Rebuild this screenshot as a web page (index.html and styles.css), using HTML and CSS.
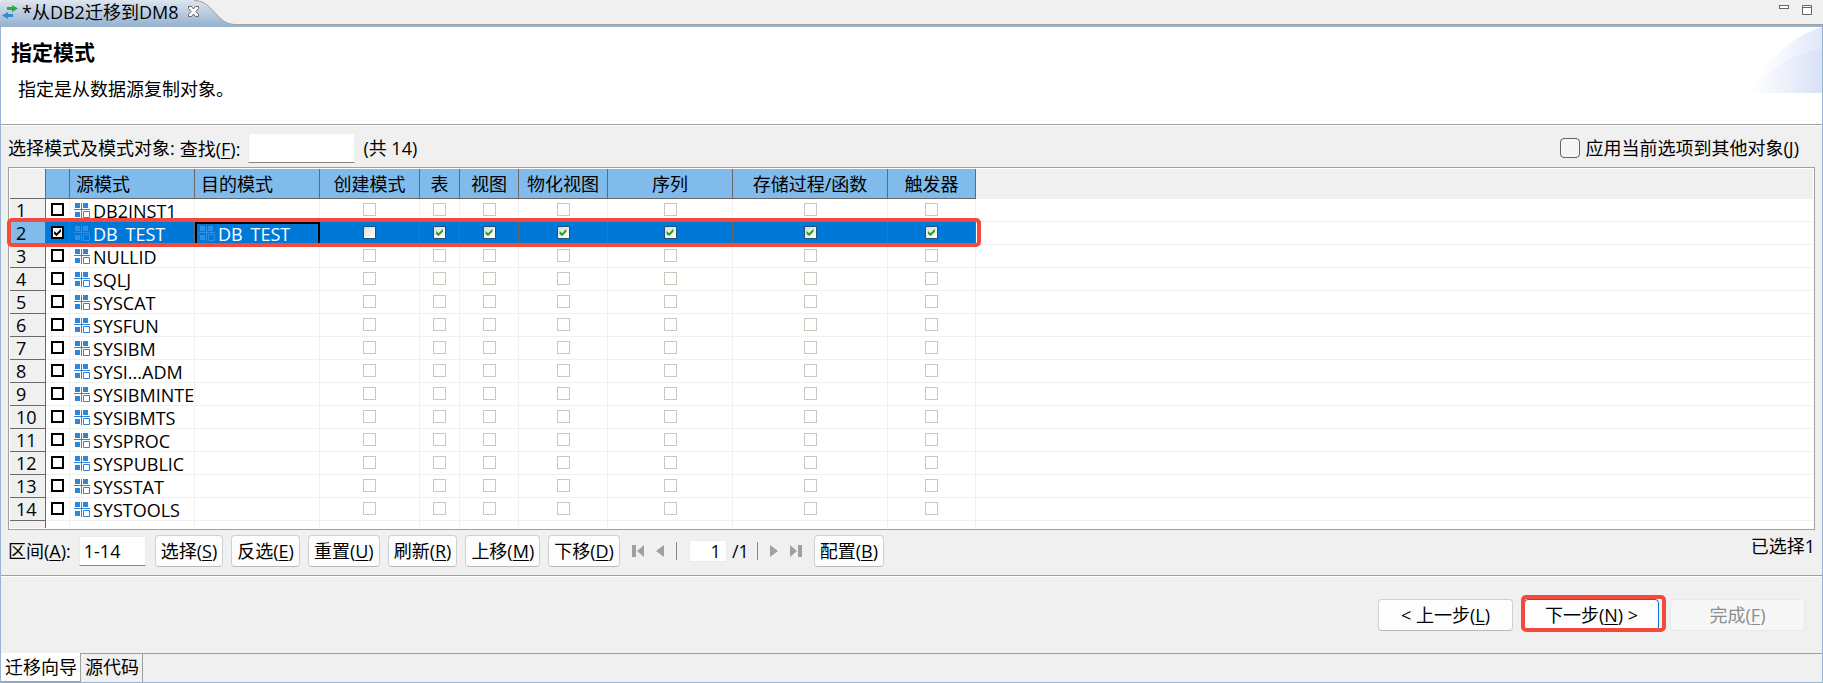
FILE: index.html
```html
<!DOCTYPE html>
<html lang="zh-CN">
<head>
  <meta charset="UTF-8" />
  <meta name="viewport" content="width=device-width, initial-scale=1.0"/>
  <title>从DB2迁移到DM8</title>
  <link rel="stylesheet" href="styles.css">
</head>
<body>
  <div class="editor-tabs">
    <div class="editor-tab">
      <svg class="tab-shape" viewBox="0 0 236 25" aria-hidden="true">
        <defs>
          <linearGradient id="tabFill" x1="0" y1="0" x2="0" y2="1">
            <stop offset="0" stop-color="#dde5ef"/>
            <stop offset="1" stop-color="#99b4d1"/>
          </linearGradient>
        </defs>
        <path d="M0 25V3Q0 0 4 0H194C206 0 211 9 217 15C223 21 227 24.500 236 24.500V25Z" fill="url(#tabFill)"/>
        <path d="M194 0.500C206 0.500 211 9 217 15C223 21 227 24.500 236 24.500" fill="none" stroke="#a0a0a0"/>
      </svg>
      <svg class="tab-icon" viewBox="0 0 16 14" aria-hidden="true">
        <path d="M5 2H10V0L16 3.500L10 7V5H5Z" fill="#2fa83c"/>
        <path d="M11 9H6V7L0 10.500L6 14V12H11Z" fill="#2f8be0"/>
      </svg>
      <span class="tab-title">*从DB2迁移到DM8</span>
      <button class="icon-button" aria-label="关闭">
        <svg width="11" height="11" viewBox="0 0 11 11">
          <path d="M0.500 0.500H3.500L5.500 3L7.500 0.500H10.500V2.500L8 5.500L10.500 8.500V10.500H7.500L5.500 8L3.500 10.500H0.500V8.500L3 5.500L0.500 2.500Z" fill="#fff" stroke="#666"/>
        </svg>
      </button>
    </div>
    <div class="window-buttons">
      <button class="icon-button" aria-label="最小化">
        <svg width="10" height="10" viewBox="0 0 10 10"><rect x="0.500" y="0.500" width="9" height="3" fill="#fff" stroke="#666"/></svg>
      </button>
      <button class="icon-button" aria-label="最大化">
        <svg width="10" height="10" viewBox="0 0 10 10"><path d="M0.500 0.500H9.500V9.500H0.500ZM0 2.500H10" fill="#fff" stroke="#666"/></svg>
      </button>
    </div>
  </div>

  <div class="editor">
    <div class="banner">
      <div>
        <h1>指定模式</h1>
        <p>指定是从数据源复制对象。</p>
      </div>
      <svg class="swoosh" viewBox="0 0 72 66" aria-hidden="true">
        <defs>
          <linearGradient id="swooshFill">
            <stop offset="0" stop-color="#dce4f7" stop-opacity="0"/>
            <stop offset="1" stop-color="#cbd8f3" stop-opacity="0.500"/>
          </linearGradient>
        </defs>
        <path d="M0 66C16 36 40 8 72 0V66Z" fill="url(#swooshFill)"/>
        <path d="M0 66C18 42 44 25 72 22V66Z" fill="url(#swooshFill)"/>
        <path d="M28 38C38 20 50 8 72 0V22C52 24 40 30 28 38Z" fill="url(#swooshFill)" opacity="0.500"/>
      </svg>
    </div>

    <div class="content">
      <div class="filter-bar">
        <span>选择模式及模式对象:</span>
        <label class="find-label" for="find">查找(<u>F</u>):</label>
        <input class="text-box find" type="text" id="find">
        <span>(共 14)</span>
        <div class="apply">
          <input type="checkbox" id="apply">
          <label for="apply">应用当前选项到其他对象(<u>J</u>)</label>
        </div>
      </div>

      <div class="grid">
        <table>
          <colgroup>
            <col class="w-num"><col class="w-pick"><col class="w-name"><col class="w-name">
            <col class="w-create"><col class="w-table"><col class="w-view"><col class="w-mview">
            <col class="w-name"><col class="w-proc"><col class="w-trigger"><col>
          </colgroup>
          <thead>
            <tr>
              <th class="corner"></th>
              <th></th>
              <th class="left">源模式</th>
              <th class="left">目的模式</th>
              <th>创建模式</th>
              <th>表</th>
              <th>视图</th>
              <th>物化视图</th>
              <th>序列</th>
              <th>存储过程/函数</th>
              <th>触发器</th>
              <th class="filler"></th>
            </tr>
          </thead>
          <tbody id="rows"></tbody>
        </table>
      </div>

      <div class="toolbar">
        <label for="range">区间(<u>A</u>):</label>
        <input class="text-box range" type="text" id="range" value="1-14">
        <div class="buttons">
          <button class="btn">选择(<u>S</u>)</button>
          <button class="btn">反选(<u>E</u>)</button>
          <button class="btn">重置(<u>U</u>)</button>
          <button class="btn">刷新(<u>R</u>)</button>
          <button class="btn">上移(<u>M</u>)</button>
          <button class="btn">下移(<u>D</u>)</button>
        </div>
        <div class="pager">
          <button class="icon-button" aria-label="首页">
            <svg width="12" height="12" viewBox="0 0 12 12"><path d="M0 0H4V12H0ZM12 0V12L5 6Z" fill="#a0a0a0"/></svg>
          </button>
          <button class="icon-button" aria-label="上一页">
            <svg width="8" height="12" viewBox="0 0 8 12"><path d="M8 0V12L0 6Z" fill="#a0a0a0"/></svg>
          </button>
          <span class="sep"></span>
          <input class="page" type="text" value="1" aria-label="页码">
          <span class="total">/1</span>
          <span class="sep"></span>
          <button class="icon-button" aria-label="下一页">
            <svg width="8" height="12" viewBox="0 0 8 12"><path d="M0 0V12L8 6Z" fill="#a0a0a0"/></svg>
          </button>
          <button class="icon-button" aria-label="末页">
            <svg width="12" height="12" viewBox="0 0 12 12"><path d="M12 0H8V12H12ZM0 0V12L7 6Z" fill="#a0a0a0"/></svg>
          </button>
        </div>
        <button class="btn">配置(<u>B</u>)</button>
        <span class="selected-count">已选择1</span>
      </div>
    </div>

    <div class="wizard-buttons">
      <button class="btn">&lt; 上一步(<u>L</u>)</button>
      <button class="btn next">下一步(<u>N</u>) &gt;</button>
      <button class="btn" disabled>完成(<u>F</u>)</button>
    </div>

    <div class="page-tabs">
      <a class="page-tab active" href="#wizard">迁移向导</a>
      <a class="page-tab" href="#source">源代码</a>
    </div>
  </div>

  <script src="script.js"></script>
</body>
</html>
```
FILE: styles.css
```css
* { box-sizing: border-box; margin: 0; padding: 0; }
body {
  font-family: "Open Sans", "Noto Sans CJK SC", sans-serif;
  font-size: 18px;
  line-height: 24px;
  color: #000;
  background: #f0f0f0;
  min-height: 100vh;
  display: flex;
  flex-direction: column;
}
button, input {
  font: inherit;
  color: inherit;
}
u {
  text-underline-offset: 2px;
  text-decoration-thickness: 1px;
}
.icon-button {
  display: flex;
  background: none;
  border: none;
}

/* editor tab strip */
.editor-tabs {
  display: flex;
  justify-content: space-between;
  height: 25px;
  border-bottom: 1px solid #a0a0a0;
}
.editor-tab {
  position: relative;
  display: flex;
  align-items: center;
  width: 236px;
  height: 25px;
  padding: 0 0 2px 2px;
}
.tab-shape {
  position: absolute;
  left: 0;
  top: 0;
  width: 236px;
  height: 25px;
}
.tab-icon {
  position: relative;
  width: 16px;
  height: 14px;
  margin-right: 4px;
}
.tab-title {
  position: relative;
  margin-right: 10px;
}
.editor-tab .icon-button {
  position: relative;
}
.window-buttons {
  display: flex;
  align-items: flex-start;
  gap: 13px;
  padding: 5px 11px 0 0;
}

.editor {
  flex: 1;
  display: flex;
  flex-direction: column;
  border: 1px solid #99b4d1;
  border-top-width: 2px;
}

/* page title */
.banner {
  display: flex;
  justify-content: space-between;
  height: 98px;
  padding-left: 10px;
  background: #fff;
  border-bottom: 1px solid #a0a0a0;
}
h1 {
  font-size: 21px;
  line-height: 24px;
  margin-top: 13px;
}
.banner p {
  margin: 13px 0 0 7px;
}
.swoosh {
  width: 72px;
  height: 66px;
}

.content {
  flex: 1;
  display: flex;
  flex-direction: column;
  padding: 0 7px;
  border-top: 1px solid #fff;
  border-bottom: 1px solid #a0a0a0;
}
.filter-bar {
  display: flex;
  align-items: center;
  height: 41px;
  padding-top: 2px;
}
.find-label {
  margin: 2px 8px 0 5px;
}
.text-box {
  height: 30px;
  background: #fff;
  border: 1px solid #ececec;
  border-bottom: 1px solid #868686;
}
.find {
  width: 107px;
  margin-right: 8px;
}
.apply {
  display: flex;
  align-items: center;
  gap: 6px;
  margin-left: auto;
  padding-right: 16px;
}
.apply input {
  appearance: none;
  width: 20px;
  height: 20px;
  border: 1px solid #626262;
  border-radius: 4px;
  background: #f5f5f5;
}

/* schema grid */
.grid {
  flex: 1;
  padding: 1px;
  background: #fff;
  border: 1px solid #a0a0a0;
}
table {
  width: 100%;
  table-layout: fixed;
  border-collapse: separate;
  border-spacing: 0;
}
.w-num { width: 36px; }
.w-pick { width: 24px; }
.w-name { width: 125px; }
.w-create { width: 100px; }
.w-table { width: 40px; }
.w-view { width: 59px; }
.w-mview { width: 89px; }
.w-proc { width: 155px; }
.w-trigger { width: 88px; }
th {
  height: 30px;
  font-weight: normal;
  text-align: center;
  white-space: nowrap;
  background: #80bbeb;
  border-right: 1px solid #696969;
  border-bottom: 1px solid #696969;
}
th.left {
  text-align: left;
  padding-left: 6px;
}
th.corner {
  background: #f0f0f0;
}
th.filler {
  background: #f0f0f0;
  border: none;
}
td {
  height: 23px;
  line-height: 22px;
  vertical-align: top;
  border-right: 1px solid #f0f0f0;
  border-bottom: 1px solid #f0f0f0;
}
td.filler {
  border-right: none;
}
td.num {
  padding-left: 6px;
  background: #f0f0f0;
  border-right-color: #696969;
  border-bottom-color: #696969;
}
td input {
  display: block;
  appearance: none;
  width: 13px;
  height: 13px;
  margin: 4px auto 0;
  background: #fff;
  border: 1px solid #c8c8bc;
}
td.pick input {
  border: 2px solid #000;
}
td input:checked::before {
  content: "";
  display: block;
  width: 9px;
  height: 9px;
  margin: 1px;
  background: #22a022;
  clip-path: polygon(12% 34%, 40% 58%, 88% 8%, 88% 42%, 40% 90%, 12% 66%);
}
td.pick input:checked::before {
  margin: 0;
  background: #000;
}
.schema {
  display: flex;
  gap: 3px;
  height: 22px;
  padding-left: 4px;
  line-height: 24px;
  white-space: nowrap;
}
.schema svg {
  flex: none;
  width: 16px;
  height: 15px;
  margin-top: 4px;
  color: #2f86d8;
}
tr.selected {
  position: relative;
}
tr.selected td {
  color: #fff;
  background: #0078d7;
  border-right-color: #696969;
}
tr.selected td.num {
  color: #000;
  background: #80bbeb;
}
tr.selected td.filler {
  background: #fff;
}
tr.selected td.target {
  outline: 2px solid #000;
  outline-offset: -2px;
}
tr.selected .schema svg {
  color: #2f8fe4;
}
tr.selected td.option input {
  border-color: #1c5180;
  background: linear-gradient(135deg, #dcdcd7, #fff);
}
tr.selected td.pick input {
  background: #fff;
}
.row-mark {
  position: absolute;
  z-index: 1;
  left: -3px;
  top: -4px;
  width: 974px;
  height: 29px;
  border: 4px solid #f44a3e;
  border-radius: 5px;
  pointer-events: none;
}
tr.last td {
  height: 7px;
  border-bottom: none;
}

/* toolbar under the grid */
.toolbar {
  display: flex;
  align-items: center;
  height: 45px;
  padding-bottom: 3px;
}
.range {
  width: 67px;
  margin: 0 9px 0 8px;
  padding-left: 4px;
}
.buttons {
  display: flex;
  gap: 8px;
}
.btn {
  height: 32px;
  padding: 0 5px;
  white-space: nowrap;
  background: #fdfdfd;
  border: 1px solid #d0d0d0;
  border-bottom-color: #bababa;
  border-radius: 4px;
}
.btn:disabled {
  color: #8c8c8c;
  background: #f7f7f7;
  border-color: #e8e8e8;
}
.pager {
  display: flex;
  align-items: center;
  gap: 12px;
  margin: 0 12px;
}
.sep {
  width: 1px;
  height: 18px;
  background: #868686;
}
.page {
  width: 38px;
  height: 22px;
  padding-right: 5px;
  text-align: right;
  background: #fff;
  border: 1px solid #ececec;
}
.total {
  margin: 0 -4px 0 -7px;
}
.selected-count {
  align-self: flex-start;
  margin: 4px 0 0 auto;
}

.wizard-buttons {
  display: flex;
  justify-content: flex-end;
  gap: 11px;
  height: 77px;
  padding: 22px 17px 0 0;
  border-top: 1px solid #fff;
}
.wizard-buttons .btn {
  width: 135px;
}
.wizard-buttons .next {
  position: relative;
  border-color: #0078d4;
}
.next::after {
  content: "";
  position: absolute;
  inset: -5px -8px -2px -4px;
  border: 4px solid #f44a3e;
  border-radius: 5px;
}

/* bottom page tabs */
.page-tabs {
  display: flex;
  height: 29px;
  border-top: 1px solid #a0a0a0;
}
.page-tab {
  padding: 1px 3px 0 4px;
  color: #000;
  text-decoration: none;
  border-right: 1px solid #a0a0a0;
}
.page-tab.active {
  margin-top: -1px;
  padding-top: 2px;
  background: #fff;
  border-bottom: 1px solid #a0a0a0;
}
```
FILE: script.js
```javascript
const schemas = [
  'DB2INST1', 'DB_TEST', 'NULLID', 'SQLJ', 'SYSCAT', 'SYSFUN', 'SYSIBM',
  'SYSI...ADM', 'SYSIBMINTE', 'SYSIBMTS', 'SYSPROC', 'SYSPUBLIC', 'SYSSTAT', 'SYSTOOLS'
];
const options = ['创建模式', '表', '视图', '物化视图', '序列', '存储过程/函数', '触发器'];
const selected = 'DB_TEST';

const icon = `<svg viewBox="0 0 16 15" aria-hidden="true">
  <path d="M1 0H6V5H1ZM9 0H14V5H9ZM1 9H6V14H1ZM7 0H8V15H7ZM0 6H16V7H0Z" fill="currentColor"/>
  <path d="M9.500 8.500H15.500V14.500H9.500Z" fill="none" stroke="currentColor"/>
</svg>`;

function schemaCell(name) {
  return `<div class="schema">${icon}<span>${name}</span></div>`;
}

function buildRow(name, index) {
  const on = name === selected;
  const boxes = options.map((option, i) => {
    const checked = on && i > 0 ? 'checked' : '';
    const disabled = on ? '' : 'disabled';
    return `<td class="option"><input type="checkbox" aria-label="${name} ${option}" ${checked} ${disabled}></td>`;
  }).join('');

  return `<tr class="${on ? 'selected' : ''}">
    <td class="num">${index + 1}${on ? '<div class="row-mark"></div>' : ''}</td>
    <td class="pick"><input type="checkbox" aria-label="${name}" ${on ? 'checked' : ''}></td>
    <td>${schemaCell(name)}</td>
    <td class="target">${on ? schemaCell(name) : ''}</td>
    ${boxes}
    <td class="filler"></td>
  </tr>`;
}

// short empty row closes the grid at the bottom edge
const lastRow = `<tr class="last"><td class="num"></td>${'<td></td>'.repeat(10)}<td class="filler"></td></tr>`;

document.getElementById('rows').innerHTML = schemas.map(buildRow).join('') + lastRow;
```
